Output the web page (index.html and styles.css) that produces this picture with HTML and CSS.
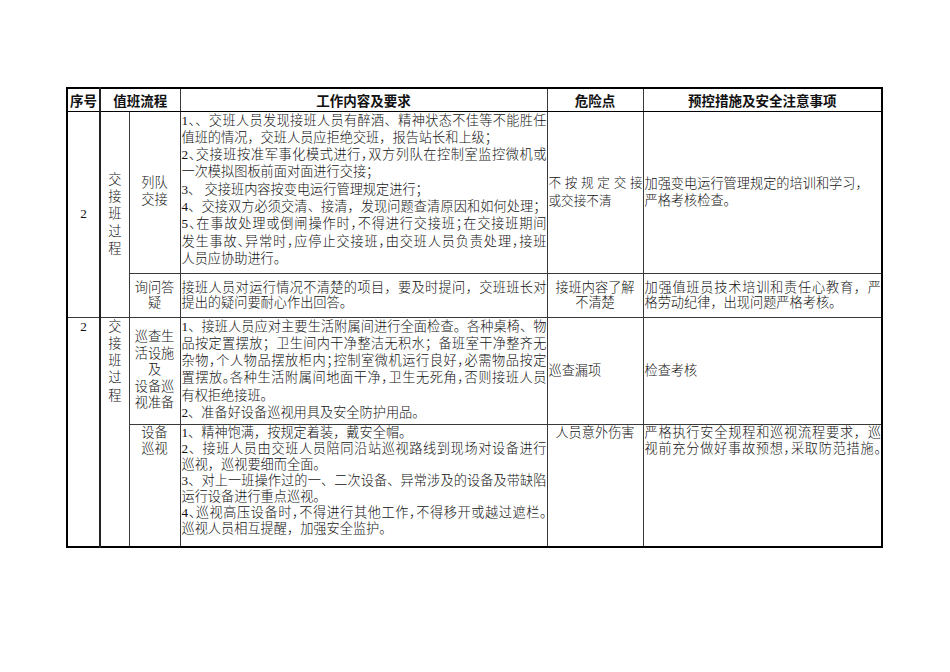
FILE: index.html
```html
<!DOCTYPE html>
<html lang="zh-CN">
<head>
<meta charset="utf-8">
<title>交接班流程</title>
<link rel="stylesheet" href="styles.css">
</head>
<body>
<table class="grid">
  <colgroup>
    <col class="w1"><col class="w2"><col class="w3"><col class="w4"><col class="w5"><col class="w6">
  </colgroup>
  <thead>
    <tr class="hd">
      <th class="sep1">序号</th>
      <th colspan="2">值班流程</th>
      <th>工作内容及要求</th>
      <th>危险点</th>
      <th>预控措施及安全注意事项</th>
    </tr>
  </thead>
  <tbody>
    <tr class="r1">
      <td rowspan="2" class="no mid sep1">2</td>
      <td rowspan="2" class="vert mid">交<br>接<br>班<br>过<br>程</td>
      <td class="lab mid">列队<br>交接</td>
      <td class="txt top p4">
        <span class="j">1、、交班人员发现接班人员有醉酒、精神状态不佳等不能胜任</span>
        <span class="l">值班的情况，交班人员应拒绝交班，报告站长和上级；</span>
        <span class="j h">2、交接班按准军事化模式进行，双方列队在控制室监控微机或</span>
        <span class="l">一次模拟图板前面对面进行交接；</span>
        <span class="l">3、 交接班内容按变电运行管理规定进行；</span>
        <span class="j">4、交接双方必须交清、接清，发现问题查清原因和如何处理；</span>
        <span class="j h">5、在事故处理或倒闸操作时，不得进行交接班；在交接班期间</span>
        <span class="j h">发生事故、异常时，应停止交接班，由交班人员负责处理，接班</span>
        <span class="l">人员应协助进行。</span>
      </td>
      <td class="txt mid risk1">
        <span class="j">不按规定交接</span>
        <span class="l">或交接不清</span>
      </td>
      <td class="txt mid lift">
        <span class="l">加强变电运行管理规定的培训和学习，</span>
        <span class="l">严格考核检查。</span>
      </td>
    </tr>
    <tr class="r2">
      <td class="lab mid">询问答<br>疑</td>
      <td class="txt mid">
        <span class="j">接班人员对运行情况不清楚的项目，要及时提问，交班班长对</span>
        <span class="l">提出的疑问要耐心作出回答。</span>
      </td>
      <td class="lab mid">接班内容了解<br>不清楚</td>
      <td class="txt mid">
        <span class="j">加强值班员技术培训和责任心教育，严</span>
        <span class="l">格劳动纪律，出现问题严格考核。</span>
      </td>
    </tr>
    <tr class="r3">
      <td rowspan="2" class="no top sep1">2</td>
      <td rowspan="2" class="vert top">交<br>接<br>班<br>过<br>程</td>
      <td class="lab mid">巡查生<br>活设施<br>及<br>设备巡<br>视准备</td>
      <td class="txt top p2">
        <span class="j">1、接班人员应对主要生活附属间进行全面检查。各种桌椅、物</span>
        <span class="j">品按定置摆放；卫生间内干净整洁无积水；备班室干净整齐无</span>
        <span class="j h">杂物，个人物品摆放柜内；控制室微机运行良好，必需物品按定</span>
        <span class="j h">置摆放。各种生活附属间地面干净，卫生无死角，否则接班人员</span>
        <span class="l">有权拒绝接班。</span>
        <span class="l">2、准备好设备巡视用具及安全防护用品。</span>
      </td>
      <td class="txt mid"><span class="l">巡查漏项</span></td>
      <td class="txt mid"><span class="l">检查考核</span></td>
    </tr>
    <tr class="r4">
      <td class="lab top p1">设备<br>巡视</td>
      <td class="txt top p1">
        <span class="l">1、精神饱满，按规定着装，戴安全帽。</span>
        <span class="j">2、接班人员由交班人员陪同沿站巡视路线到现场对设备进行</span>
        <span class="l">巡视，巡视要细而全面。</span>
        <span class="j">3、对上一班操作过的一、二次设备、异常涉及的设备及带缺陷</span>
        <span class="l">运行设备进行重点巡视。</span>
        <span class="j h">4、巡视高压设备时，不得进行其他工作，不得移开或越过遮栏。</span>
        <span class="l">巡视人员相互提醒，加强安全监护。</span>
      </td>
      <td class="lab top p1">人员意外伤害</td>
      <td class="txt top p1 lh166">
        <span class="j">严格执行安全规程和巡视流程要求，巡</span>
        <span class="j h">视前充分做好事故预想，采取防范措施。</span>
      </td>
    </tr>
  </tbody>
</table>
</body>
</html>
```

FILE: styles.css
```css
html, body {
  margin: 0;
  padding: 0;
  background: #ffffff;
}

body {
  font-family: "Liberation Serif", "Noto Sans CJK SC", serif;
  font-size: 13.2px;
  font-weight: 300;
  color: #111111;
}

.grid {
  border-collapse: collapse;
  table-layout: fixed;
  width: 815px;
  margin: 87px 0 0 66px;
  border: 2px solid #000000;
}

.w1 { width: 33px; }
.w2 { width: 29px; }
.w3 { width: 51px; }
.w4 { width: 367px; }
.w5 { width: 96px; }
.w6 { width: 239px; }

.grid th,
.grid td {
  border: 1px solid #3a3a3a;
  padding: 0 1px;
  overflow: hidden;
}

.grid td.txt {
  padding: 0 0 0 1px;
}

.grid th {
  font-family: "Noto Sans CJK SC", sans-serif;
  font-weight: 700;
  font-size: 13.5px;
  line-height: 16px;
  text-align: center;
  vertical-align: middle;
  border-bottom: 1px solid #000000;
}

.grid .sep1 {
  border-right: 2px solid #222222;
}

.hd { height: 23px; }
.r1 { height: 162px; }
.r2 { height: 44px; }
.r3 { height: 107px; }
.r4 { height: 123px; }

.mid { vertical-align: middle; }
.top { vertical-align: top; }

.no {
  text-align: center;
  line-height: 17.3px;
}

.vert {
  text-align: center;
  line-height: 17.3px;
}

.lab {
  text-align: center;
  line-height: 16.6px;
}

.txt {
  line-height: 17.3px;
}

.txt .j {
  display: block;
  white-space: nowrap;
  text-align: justify;
  text-align-last: justify;
}

.txt .h {
  font-feature-settings: "halt";
}

.txt .l {
  display: block;
  white-space: nowrap;
  text-align: left;
}

.r2 .lab,
.r2 .txt {
  line-height: 15px;
}

.r4 .txt,
.r4 .lab {
  line-height: 16.1px;
}

.r4 .lh166 {
  line-height: 16.6px;
}

.risk1 {
  line-height: 18px;
  font-size: 12.6px;
}

.lift {
  padding-bottom: 40px;
}

.p4 { padding-top: 4px; }
.p2 { padding-top: 2px; }
.p1 { padding-top: 1px; }
```
